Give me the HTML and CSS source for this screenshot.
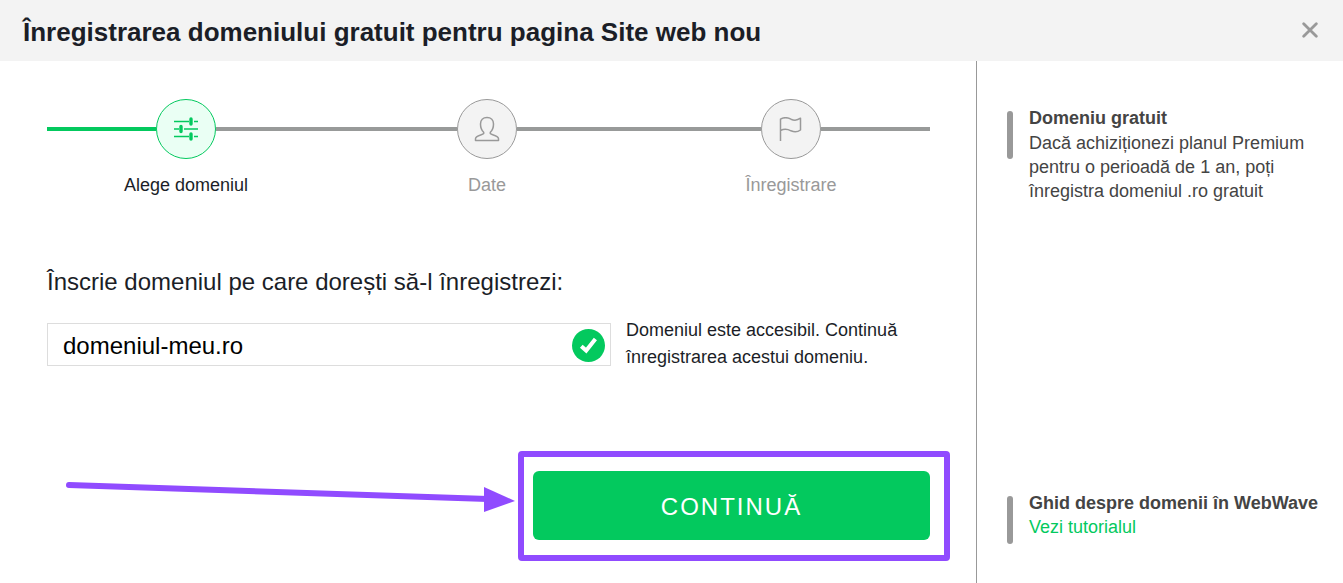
FILE: index.html
```html
<!DOCTYPE html>
<html lang="ro">
<head>
    <meta charset="UTF-8">
    <meta name="viewport" content="width=device-width, initial-scale=1.0">
    <title>Înregistrarea domeniului gratuit</title>
    <link rel="stylesheet" href="styles.css">
</head>
<body>
    <header class="header">
        <h1>Înregistrarea domeniului gratuit pentru pagina Site web nou</h1>
        <button type="button" class="close" aria-label="Închide">
            <svg width="16" height="16" viewBox="0 0 16 16" fill="none" stroke="#999" stroke-width="2.8" stroke-linecap="round">
                <path d="M1.7 1.7L14.3 14.3M14.3 1.7L1.7 14.3"/>
            </svg>
        </button>
    </header>

    <div class="content">
        <main class="main">
            <div class="steps">
                <span class="line line-end line-active"></span>
                <div class="step step-active">
                    <div class="step-icon">
                        <svg width="24" height="24" viewBox="0 0 24 24" fill="none" stroke="currentColor">
                            <path stroke-width="1.6" d="M0 4.5H15M20 4.5H24M0 12H5M10 12H24M0 19.5H15M20 19.5H24"/>
                            <path stroke-width="3.4" stroke-linecap="round" d="M17 2V7M7 9.5V14.5M17 17V22"/>
                        </svg>
                    </div>
                    <span class="step-label">Alege domeniul</span>
                </div>
                <span class="line line-first"></span>
                <div class="step">
                    <div class="step-icon">
                        <svg width="26" height="26" viewBox="0 0 26 26" fill="none" stroke="currentColor" stroke-width="1.5" stroke-linejoin="round">
                            <path d="M13 1.5C9 1.5 6.5 4.2 6.5 8C6.5 11.5 7.7 14.5 9.7 16.2V17.5C8.5 19 1.5 19.5 1.5 22.7V24.5H24.5V22.7C24.5 19.5 17.5 19 16.3 17.5V16.2C18.3 14.5 19.5 11.5 19.5 8C19.5 4.2 17 1.5 13 1.5Z"/>
                        </svg>
                    </div>
                    <span class="step-label">Date</span>
                </div>
                <span class="line line-second"></span>
                <div class="step">
                    <div class="step-icon">
                        <svg width="24" height="24" viewBox="0 0 24 24" fill="none" stroke="currentColor" stroke-width="1.5" stroke-linejoin="round">
                            <path d="M1.5 24V2.2C5 0 9 .6 12 2.2C15 3.6 18.5 3.4 21.5 1.2V13C18.5 15.2 15 15.2 12 13.8C9 12.3 5 11.8 1.5 13.5"/>
                        </svg>
                    </div>
                    <span class="step-label">Înregistrare</span>
                </div>
                <span class="line line-end"></span>
            </div>

            <form class="form">
                <label for="domain">Înscrie domeniul pe care dorești să-l înregistrezi:</label>
                <div class="form-row">
                    <div class="field">
                        <input type="text" id="domain" value="domeniul-meu.ro" spellcheck="false">
                        <svg class="check" width="33" height="33" viewBox="0 0 33 33">
                            <circle cx="16.5" cy="16.5" r="16.5" fill="#03c95e"/>
                            <path d="M9.3 17.2L14.2 21.6L23.4 10.1" fill="none" stroke="#fff" stroke-width="4"/>
                        </svg>
                    </div>
                    <p class="message">Domeniul este accesibil. Continuă înregistrarea acestui domeniu.</p>
                </div>

                <div class="actions">
                    <button type="submit" class="btn">CONTINUĂ</button>
                    <span class="highlight"></span>
                    <svg class="arrow" width="450" height="32" viewBox="0 0 450 32">
                        <path d="M3 4L422 18" fill="none" stroke="#904bff" stroke-width="6" stroke-linecap="round"/>
                        <path d="M418 6L449 20L418 31Z" fill="#904bff"/>
                    </svg>
                </div>
            </form>
        </main>

        <aside class="sidebar">
            <div class="tip">
                <div>
                    <h2>Domeniu gratuit</h2>
                    <p>Dacă achiziționezi planul Premium pentru o perioadă de 1 an, poți înregistra domeniul .ro gratuit</p>
                </div>
            </div>
            <div class="tip">
                <div>
                    <h2>Ghid despre domenii în WebWave</h2>
                    <a href="#">Vezi tutorialul</a>
                </div>
            </div>
        </aside>
    </div>
</body>
</html>
```

FILE: styles.css
```css
* {
    box-sizing: border-box;
    font-family: Arial, "Liberation Sans", sans-serif;
}

body {
    display: flex;
    flex-direction: column;
    min-height: 100vh;
    margin: 0;
    background-color: #fff;
    color: #1b1e27;
    font-size: 18px;
}

h1, h2, p {
    margin: 0;
}

.header {
    display: flex;
    align-items: flex-end;
    justify-content: space-between;
    padding: 16px 25px 13px 23px;
    background-color: #f3f3f3;
}

.header h1 {
    font-size: 26px;
    line-height: 32px;
}

.close {
    display: flex;
    padding: 0 0 10px;
    border: none;
    background: none;
    cursor: pointer;
}

.content {
    display: flex;
    flex: 1;
}

.main {
    display: flex;
    flex: 1;
    flex-direction: column;
    padding: 38px 46px 43px 47px;
}

/* Pașii înregistrării */
.steps {
    display: flex;
}

.line {
    height: 4px;
    margin-top: 28px;
    background-color: #989a99;
}

.line-first {
    flex: 241;
}

.line-second {
    flex: 244;
}

.line-end {
    flex: 0 0 109px;
}

.line-active {
    background-color: #03c95e;
}

.step {
    display: flex;
    flex-direction: column;
    align-items: center;
    width: 60px;
    color: #999;
}

.step-icon {
    display: flex;
    align-items: center;
    justify-content: center;
    width: 60px;
    height: 60px;
    border: 1px solid #999;
    border-radius: 50%;
    background-color: #f3f3f3;
}

.step-label {
    margin-top: 14px;
    line-height: 24px;
    white-space: nowrap;
}

.step-active .step-icon {
    border-color: #03c95e;
    background-color: #eafff4;
    color: #03c95e;
}

.step-active .step-label {
    color: #1b1e27;
}

/* Formular */
.form {
    display: flex;
    flex: 1;
    flex-direction: column;
    margin-top: 69px;
}

.form label {
    font-size: 24px;
    line-height: 32px;
}

.form-row {
    display: flex;
    align-items: flex-start;
    gap: 15px;
    margin-top: 19px;
}

.field {
    position: relative;
    flex: 1;
    margin-top: 6px;
}

.field input {
    display: block;
    width: 100%;
    height: 43px;
    padding: 3px 45px 0 15px;
    border: 1px solid #ddd;
    color: #000;
    font-size: 24px;
    outline: none;
}

.check {
    position: absolute;
    top: 6px;
    right: 6px;
}

.message {
    width: 304px;
    line-height: 27px;
}

.actions {
    position: relative;
    width: 397px;
    margin-top: auto;
    margin-left: auto;
}

.btn {
    display: block;
    width: 100%;
    height: 69px;
    padding: 2px 0 0;
    border: none;
    border-radius: 6px;
    background-color: #03c95e;
    color: #fff;
    font-size: 24px;
    letter-spacing: 2px;
    cursor: pointer;
}

.btn:hover {
    background-color: #02b354;
}

.highlight {
    position: absolute;
    top: -20px;
    right: -20px;
    bottom: -21px;
    left: -15px;
    border: 6px solid #904bff;
    border-radius: 4px;
    pointer-events: none;
}

.arrow {
    position: absolute;
    top: 10px;
    right: 414px;
}

/* Coloana din dreapta */
.sidebar {
    display: flex;
    flex-direction: column;
    justify-content: space-between;
    width: 367px;
    padding: 45px 20px 39px 30px;
    border-left: 1px solid #999;
    color: #444;
    line-height: 24px;
}

.sidebar h2 {
    font-size: 18px;
}

.sidebar p {
    margin-top: 1px;
}

.sidebar a {
    color: #03c95e;
    text-decoration: none;
}

.sidebar a:hover {
    text-decoration: underline;
}

.tip {
    display: flex;
    gap: 16px;
}

.tip::before {
    content: "";
    flex: none;
    width: 6px;
    height: 48px;
    margin-top: 5px;
    border-radius: 3px;
    background-color: #999;
}
```
